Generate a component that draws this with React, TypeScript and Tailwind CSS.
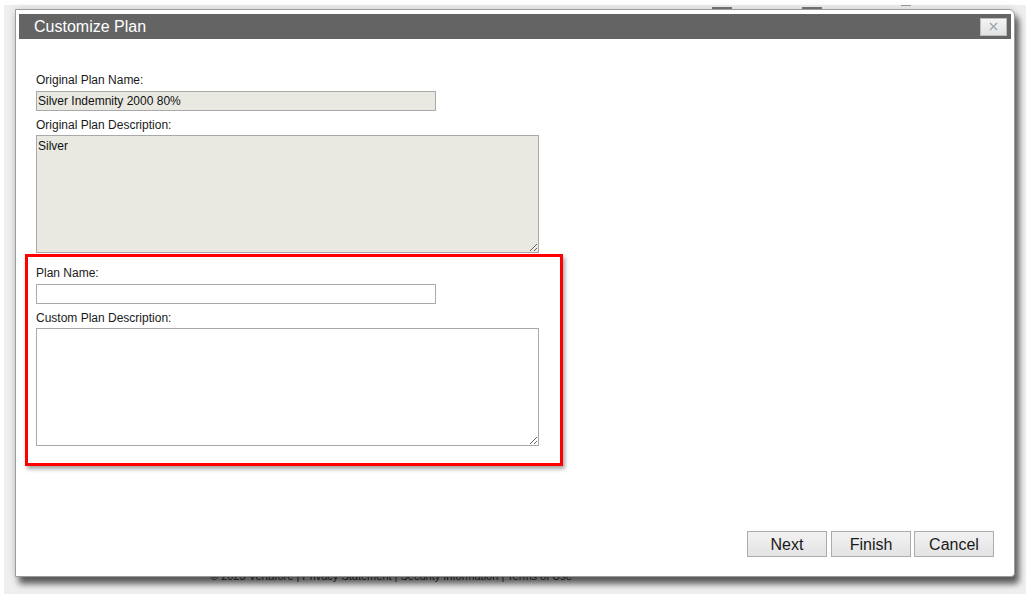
import React from 'react';

const font = { fontFamily: '"Liberation Sans", Arial, sans-serif' };

const Label: React.FC<{ children: React.ReactNode }> = ({ children }) => (
  <div className="h-[16px] text-[12px] leading-[16px] text-[#1a1a1a]">{children}</div>
);

const DialogButton: React.FC<{ label: string; className?: string }> = ({ label, className }) => (
  <button
    className={
      'w-[80px] h-[26px] border border-[#acacac] bg-gradient-to-b from-[#f2f2f2] to-[#e3e3e3] text-[16px] leading-[26px] text-[#1a1a1a] ' +
      (className ?? '')
    }
  >
    {label}
  </button>
);

export default function App() {
  return (
    <div className="w-[1033px] h-[599px] bg-white pt-[5px] pl-[4px] overflow-hidden" style={font}>
      <div className="relative w-[1022px] h-[589px] bg-[#efefef] pl-[11px] pt-[4px]">
        {/* page content peeking behind the modal */}
        <div className="absolute left-[708px] top-[2px] w-[20px] h-[2px] bg-[#777]" />
        <div className="absolute left-[798px] top-[2px] w-[20px] h-[2px] bg-[#777]" />
        <div className="absolute left-[897px] top-[0px] w-[10px] h-[4px] border-t border-[#999]" />
        <div className="absolute left-[206px] top-[563px] text-[11px] text-[#3a3a3a] whitespace-nowrap">
          © 2023 Vertafore | Privacy Statement | Security Information | Terms of Use
        </div>

        <div className="relative z-10 w-[1000px] h-[568px] bg-white border border-[#9c9c9c] rounded-tr-[6px] rounded-br-[4px] shadow-[4px_7px_6px_rgba(0,0,0,0.6),0_0_8px_rgba(0,0,0,0.15)] flex flex-col">
          <div className="mx-[3px] mt-[4px] h-[25px] bg-[#646464] flex items-center justify-between pl-[15px] pr-[4px]">
            <span className="text-white text-[16px] leading-none">Customize Plan</span>
            <button className="w-[27px] h-[18px] bg-gradient-to-b from-[#f4f4f4] to-[#e2e2e2] border border-[#bcbcbc] flex items-center justify-center">
              <svg width="9" height="9" viewBox="0 0 9 9">
                <path d="M1 1 L8 8 M8 1 L1 8" stroke="#9aa4ad" strokeWidth="1.3" />
              </svg>
            </button>
          </div>

          <div className="pl-[20px] pt-[33px] flex flex-col">
            <Label>Original Plan Name:</Label>
            <input
              readOnly
              value="Silver Indemnity 2000 80%"
              className="mt-[3px] w-[400px] h-[20px] border border-[#a9a9a9] bg-[#e9e9e1] px-[1px] text-[12px] text-[#111] outline-none"
            />
            <div className="mt-[6px]">
              <Label>Original Plan Description:</Label>
            </div>
            <textarea
              readOnly
              value="Silver"
              className="mt-[2px] w-[503px] h-[118px] border border-[#a9a9a9] bg-[#e9e9e1] px-[1px] py-[3px] text-[12px] leading-[15px] text-[#111] outline-none"
            />

            <div className="ml-[-11px] mt-[1px] w-[538px] border-[3px] border-[#ff0000] shadow-[2px_3px_4px_rgba(0,0,0,0.35)] pl-[8px] pt-[8px] pb-[17px] flex flex-col">
              <Label>Plan Name:</Label>
              <input className="mt-[3px] w-[400px] h-[20px] border border-[#a9a9a9] bg-white text-[12px] outline-none" />
              <div className="mt-[6px]">
                <Label>Custom Plan Description:</Label>
              </div>
              <textarea className="mt-[2px] w-[503px] h-[118px] border border-[#a9a9a9] bg-white text-[12px] outline-none" />
            </div>
          </div>

          <div className="flex-1" />
          <div className="flex justify-end pr-[20px] pb-[19px]">
            <DialogButton label="Next" />
            <DialogButton label="Finish" className="ml-[4px]" />
            <DialogButton label="Cancel" className="ml-[3px]" />
          </div>
        </div>
      </div>
    </div>
  );
}
